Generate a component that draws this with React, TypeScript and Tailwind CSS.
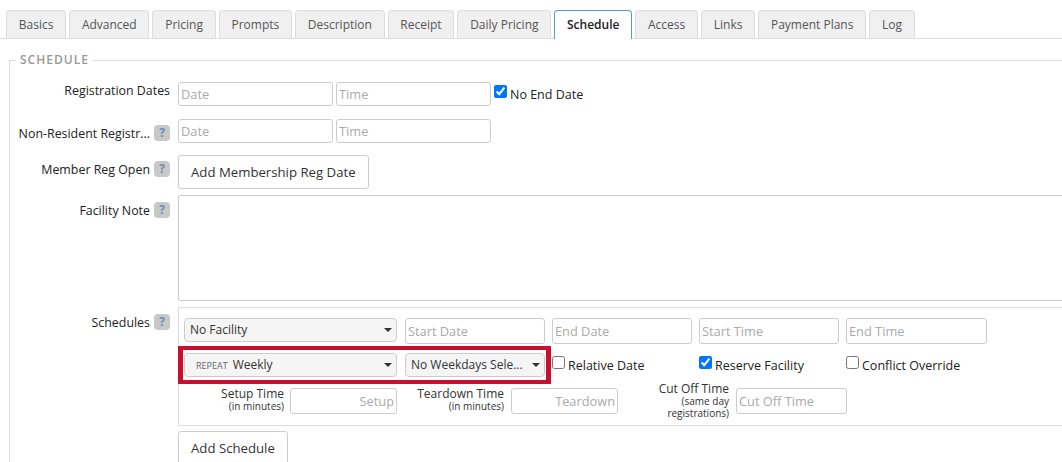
const tabs = ["Basics", "Advanced", "Pricing", "Prompts", "Description", "Receipt", "Daily Pricing", "Schedule", "Access", "Links", "Payment Plans", "Log"];

function Help() {
  return (
    <span className="ml-[4px] flex h-[16px] w-[16px] shrink-0 items-center justify-center rounded-[4px] bg-[#c8c8c8] text-[12px] font-bold text-[#6d8db0]">
      ?
    </span>
  );
}

function Field({ placeholder, className }: { placeholder: string; className: string }) {
  return (
    <input
      readOnly
      placeholder={placeholder}
      className={`rounded-[3px] border border-[#ccc] bg-white px-[2px] text-[12.8px] text-[#333] outline-none placeholder:text-[#aaa] ${className}`}
    />
  );
}

function Select({ className, children }: { className: string; children: React.ReactNode }) {
  return (
    <div className={`flex h-[24px] items-center justify-between rounded-[4px] border border-[#ccc] bg-[#f5f5f5] pl-[5px] pr-[4px] text-[12px] text-[#333] ${className}`}>
      <span className="flex items-center whitespace-nowrap">{children}</span>
      <span className="h-0 w-0 border-x-[4px] border-t-[4px] border-x-transparent border-t-[#333]" />
    </div>
  );
}

function Check({ label, checked, className }: { label: string; checked?: boolean; className: string }) {
  return (
    <label className={`mt-[2px] flex items-center text-[12.5px] font-medium text-[#222] ${className}`}>
      <input type="checkbox" defaultChecked={checked} className="m-0 -mt-[8px] mr-[3px] h-[13px] w-[13px]" />
      {label}
    </label>
  );
}

function Row({ label, help, className, labelClass, children }: { label: string; help?: boolean; className?: string; labelClass?: string; children: React.ReactNode }) {
  return (
    <div className={`flex ${className ?? ""}`}>
      <div className={`flex w-[152px] shrink-0 justify-end text-[12.4px] font-medium leading-[18px] text-[#222] ${labelClass ?? "pt-[6px]"}`}>
        <span className="whitespace-nowrap">{label}</span>
        {help && <Help />}
      </div>
      <div className="ml-[8px] min-w-0 flex-1">{children}</div>
    </div>
  );
}

export default function App() {
  return (
    <div className="h-[462px] w-[1062px] overflow-hidden bg-white font-['Open_Sans',sans-serif] text-[#333]">
      <div className="flex gap-[3px] border-b border-[#ddd] pl-[6px] pt-[10px]">
        {tabs.map((t) =>
          t === "Schedule" ? (
            <div key={t} className="-mb-px flex h-[29px] items-center rounded-t-[4px] border border-b-0 border-[#5a9bc4] bg-white px-[11.75px] text-[12px] font-semibold text-[#222]">
              {t}
            </div>
          ) : (
            <div key={t} className="flex h-[28px] items-center rounded-t-[4px] border border-b-0 border-[#ddd] bg-[#f0f0f0] px-[11.75px] text-[12px] text-[#555]">
              {t}
            </div>
          ),
        )}
      </div>

      <fieldset className="ml-[9px] mt-[14px] w-[1100px] border-l border-t border-[#ddd] pl-[8px]">
        <legend className="-ml-[2px] px-[4px] text-[12px] font-semibold leading-[14px] tracking-[1px] text-[#999]">SCHEDULE</legend>

        <Row label="Registration Dates" className="mt-[15px]" labelClass="leading-[16px]">
          <div className="flex items-center gap-[3px]">
            <Field placeholder="Date" className="h-[24px] w-[155px]" />
            <Field placeholder="Time" className="h-[24px] w-[155px]" />
            <Check label="No End Date" checked />
          </div>
        </Row>

        <Row label="Non-Resident Registr..." help className="mt-[13px]">
          <div className="flex gap-[3px]">
            <Field placeholder="Date" className="h-[24px] w-[155px]" />
            <Field placeholder="Time" className="h-[24px] w-[155px]" />
          </div>
        </Row>

        <Row label="Member Reg Open" help className="mt-[12px]">
          <button className="h-[34px] rounded-[3px] border border-[#ccc] bg-white px-[12px] pt-[1px] text-[13.2px] text-[#333]">Add Membership Reg Date</button>
        </Row>

        <Row label="Facility Note" help className="mt-[6px]" labelClass="pt-[7px]">
          <div className="h-[106px] rounded-l-[3px] border border-r-0 border-[#ccc] bg-white" />
        </Row>

        <Row label="Schedules" help className="mt-[6px]" labelClass="pt-[7px]">
          <div className="border-y border-l border-[#ddd] pb-[6px] pl-[5px] pt-[10px]">
            <div className="flex items-start">
              <Select className="w-[213px]">No Facility</Select>
              <div className="ml-[8px] flex gap-[7px]">
                <Field placeholder="Start Date" className="h-[26px] w-[140px]" />
                <Field placeholder="End Date" className="h-[26px] w-[140px]" />
                <Field placeholder="Start Time" className="h-[26px] w-[140px]" />
                <Field placeholder="End Time" className="h-[26px] w-[141px]" />
              </div>
            </div>
            <div className="mt-[2px] flex items-center">
              <div className="-ml-[6px] flex gap-[8px] border-x-[5px] border-y-4 border-[#c8102e] px-[1px] py-[3px]">
                <Select className="w-[213px]">
                  <span className="ml-[6px] mr-[5px] mt-[2px] text-[9px] text-[#666]">REPEAT</span>Weekly
                </Select>
                <Select className="w-[140px]">No Weekdays Sele...</Select>
              </div>
              <Check label="Relative Date" className="ml-[1px] w-[147px]" />
              <Check label="Reserve Facility" checked className="w-[147px]" />
              <Check label="Conflict Override" className="w-[130px]" />
            </div>
            <div className="-mt-[2px] flex items-center">
              <div className="w-[100px] pb-[2px] text-right">
                <div className="text-[12px] leading-[13px]">Setup Time</div>
                <div className="text-[10px] leading-[12px]">(in minutes)</div>
              </div>
              <Field placeholder="Setup" className="ml-[6px] h-[26px] w-[107px] text-right" />
              <div className="ml-[8px] w-[99px] pb-[2px] text-right">
                <div className="text-[12px] leading-[13px]">Teardown Time</div>
                <div className="text-[10px] leading-[12px]">(in minutes)</div>
              </div>
              <Field placeholder="Teardown" className="ml-[7px] h-[26px] w-[107px] text-right" />
              <div className="ml-[8px] w-[103px] text-right">
                <div className="text-[12px] leading-[13px]">Cut Off Time</div>
                <div className="text-[10px] leading-[12px]">(same day</div>
                <div className="text-[10px] leading-[12px]">registrations)</div>
              </div>
              <Field placeholder="Cut Off Time" className="ml-[7px] h-[26px] w-[111px]" />
            </div>
          </div>
          <button className="mt-[5px] h-[34px] rounded-[3px] border border-[#ccc] bg-white px-[12px] pt-[1px] text-[13.2px] text-[#333]">Add Schedule</button>
        </Row>
      </fieldset>
    </div>
  );
}
